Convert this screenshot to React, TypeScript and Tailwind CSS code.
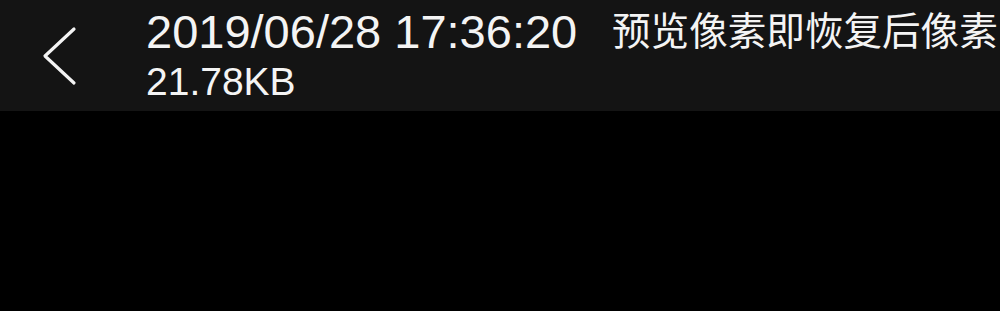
export default function App() {
  return (
    <div className="w-[1000px] h-[311px] bg-black overflow-hidden">
      <header className="flex h-[111px] bg-[#141414] text-[#f4f4f4] font-['Liberation_Sans','Noto_Sans_CJK_SC',sans-serif]">
        <div className="w-[146px] shrink-0 flex items-center pl-[40px]">
          <svg width="38" height="60" viewBox="0 0 38 60" fill="none">
            <polyline
              points="34,3 5,30 34,57"
              stroke="#f4f4f4"
              strokeWidth="3.2"
              strokeLinecap="round"
              strokeLinejoin="round"
            />
          </svg>
        </div>
        <div className="w-[466px] shrink-0 pt-[8px] flex flex-col gap-[7px]">
          <div className="text-[47px] leading-[47px] whitespace-nowrap">2019/06/28 17:36:20</div>
          <div className="text-[39px] leading-[39px] whitespace-nowrap">21.78KB</div>
        </div>
        <div className="pt-[9px] text-[38.6px] leading-[39px] whitespace-nowrap font-['Noto_Sans_CJK_SC',sans-serif]">
          预览像素即恢复后像素
        </div>
      </header>
    </div>
  );
}
